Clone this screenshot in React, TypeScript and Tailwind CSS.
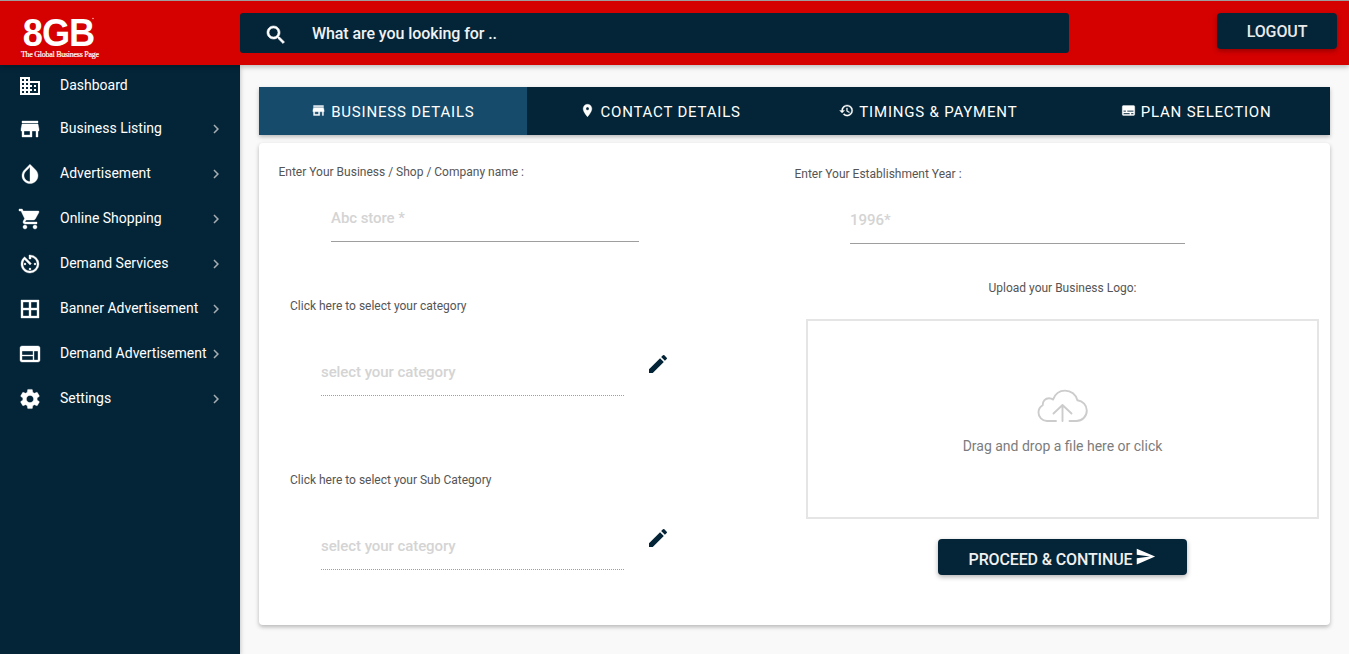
import React from "react";
import {
  MdBusiness,
  MdShoppingCart,
  MdAvTimer,
  MdBorderAll,
  MdWeb,
  MdSettings,
  MdChevronRight,
  MdPlace,
  MdRestore,
  MdSubtitles,
  MdEdit,
  MdSend,
} from "react-icons/md";

type IconProps = { className?: string };

function DropIcon({ className }: IconProps) {
  return (
    <svg viewBox="0 0 24 24" fill="currentColor" className={className}>
      <path d="M17.66 7.93L12 2.27 6.34 7.93c-3.12 3.12-3.12 8.19 0 11.31C7.9 20.8 9.95 21.58 12 21.58s4.1-.78 5.66-2.34c3.12-3.12 3.12-8.19 0-11.31zM12 19.59c-1.6 0-3.11-.62-4.24-1.76C6.62 16.69 6 15.19 6 13.59s.62-3.11 1.76-4.24L12 5.1v14.49z" />
    </svg>
  );
}

function StoreIcon({ className }: IconProps) {
  return (
    <svg viewBox="0 0 24 24" fill="currentColor" className={className}>
      <path d="M20 4H4v2h16V4zm1 10v-2l-1-5H4l-1 5v2h1v6h10v-6h4v6h2v-6h1zm-9 4H6v-4h6v4z" />
    </svg>
  );
}

function SearchIcon({ className }: IconProps) {
  return (
    <svg viewBox="0 0 24 24" fill="currentColor" stroke="currentColor" strokeWidth="0.6" className={className}>
      <path d="M15.5 14h-.79l-.28-.27C15.41 12.59 16 11.11 16 9.5 16 5.91 13.09 3 9.500 3S3 5.910 3 9.500 5.910 16 9.500 16c1.610 0 3.090-.59 4.230-1.570l.27.28v.79l5 4.990L20.490 19l-4.990-5zm-6 0C7.010 14 5 11.990 5 9.500S7.010 5 9.500 5 14 7.010 14 9.500 11.990 14 9.500 14z" />
    </svg>
  );
}

function CloudIcon() {
  return (
    <svg
      width="52"
      height="34"
      viewBox="0 0 52 34"
      fill="none"
      stroke="#cccccc"
      strokeWidth="1.9"
      strokeLinecap="round"
      strokeLinejoin="round"
    >
      <path d="M19 32H10C5 32 1.500 28 1.500 23.500c0-3.300 1.600-5.700 4.200-7.200C5.500 12 8.500 9.200 12 9.200c1.600 0 3 .5 4 1.400C18 5.200 22.300 1.600 28 1.600c6.200 0 11 4 12.400 9.700C45.800 11.900 49.800 16.200 49.800 21.500 49.800 27.500 45 32 39.500 32H32.500" />
      <path d="M25.500 32V16M16.500 24.500 25.500 16l9 8.500" />
    </svg>
  );
}

const NAV = [
  { label: "Business Listing", icon: StoreIcon },
  { label: "Advertisement", icon: DropIcon },
  { label: "Online Shopping", icon: MdShoppingCart },
  { label: "Demand Services", icon: MdAvTimer },
  { label: "Banner Advertisement", icon: MdBorderAll },
  { label: "Demand Advertisement", icon: MdWeb },
  { label: "Settings", icon: MdSettings },
];

const TABS = [
  { label: "BUSINESS DETAILS", icon: StoreIcon, active: true },
  { label: "CONTACT DETAILS", icon: MdPlace, active: false },
  { label: "TIMINGS & PAYMENT", icon: MdRestore, active: false },
  { label: "PLAN SELECTION", icon: MdSubtitles, active: false },
];

function Header() {
  return (
    <header className="relative z-20 flex h-[65px] shrink-0 items-start border-t border-[#9e9e9e] bg-[#d50000] pt-3 shadow-[0_2px_5px_rgba(0,0,0,0.26)]">
      <div className="w-60 shrink-0 pl-5">
        <svg width="90" height="50" viewBox="0 0 90 50" fill="#fff" className="overflow-visible">
          <text transform="scale(0.93 1)" x="3" y="33" fontFamily="Liberation Sans, sans-serif" fontWeight="700" fontSize="39" letterSpacing="-1.1">
            8GB
          </text>
          <circle cx="73" cy="5.500" r=".8" fillOpacity=".7" />
          <text x="1" y="44" fontFamily="Liberation Serif, serif" fontWeight="400" fontSize="8" stroke="#fff" strokeWidth=".2" textLength="78" lengthAdjust="spacing">
            The Global Business Page
          </text>
        </svg>
      </div>
      <div className="flex h-10 w-[829px] items-center rounded-[3px] bg-[#042538] pl-6 text-white">
        <SearchIcon className="mt-[3px] size-6" />
        <span className="mt-0.5 ml-6 text-base font-medium tracking-[-0.08px] text-[#f0f2f3]">What are you looking for ..</span>
      </div>
      <button className="mr-3 ml-auto h-9 w-[120px] rounded-sm bg-[#042538] pt-px text-base font-medium tracking-[-0.1px] text-[#eaeaea] shadow-[0_2px_5px_rgba(0,0,0,0.3)]">
        LOGOUT
      </button>
    </header>
  );
}

function Sidebar() {
  return (
    <nav className="z-10 flex w-60 shrink-0 flex-col bg-[#042538] text-sm text-white shadow-[0_2px_5px_rgba(0,0,0,0.26)]">
      <a className="flex h-[41px] items-center pl-[18px]">
        <MdBusiness className="size-6" />
        <span className="-mt-0.5 ml-[18px]">Dashboard</span>
      </a>
      {NAV.map(({ label, icon: Icon }) => (
        <a key={label} className="flex h-[45px] items-center pr-[15px] pl-[18px]">
          <Icon className="size-6 shrink-0 stroke-current [stroke-width:0.35] [&>path[fill=none]]:stroke-none" />
          <span className="-mt-0.5 ml-[18px] whitespace-nowrap">{label}</span>
          <MdChevronRight className="ml-auto size-[18px] shrink-0 text-[#a5adb3]" />
        </a>
      ))}
    </nav>
  );
}

function CategoryField({ label }: { label: string }) {
  return (
    <div className="flex h-[174px] flex-col">
      <span className="ml-[31px] text-xs leading-[18px]">{label}</span>
      <div className="mt-8 ml-[62px] flex">
        <div className="h-[49px] w-[303px] border-b border-dotted border-[#9e9e9e] pt-3.5 text-[15px] leading-[22px] font-medium tracking-[-0.07px] text-[#d4d4d4]">
          select your category
        </div>
        <MdEdit className="mt-[5px] ml-[22px] size-6 text-[#042538]" />
      </div>
    </div>
  );
}

export default function App() {
  return (
    <div className="flex h-[654px] w-[1349px] flex-col overflow-hidden bg-[#f9f9f9] font-[Roboto,sans-serif]">
      <Header />
      <div className="flex min-h-0 flex-1">
        <Sidebar />
        <main className="flex flex-1 flex-col pt-[22px] pr-[19px] pl-[19px]">
          <div className="grid h-12 shrink-0 grid-cols-4 bg-[#042538] text-white shadow-[0_2px_4px_rgba(0,0,0,0.25)]">
            {TABS.map(({ label, icon: Icon, active }) => (
              <button
                key={label}
                className={
                  active
                    ? "flex items-center justify-center gap-[5px] bg-[#164b6c]"
                    : "flex items-center justify-center gap-[5px]"
                }
              >
                <Icon className="-mt-px size-[15px] stroke-current [stroke-width:0.5] [&>path[fill=none]]:stroke-none" />
                <span className="mt-0.5 text-[15px] tracking-[0.8px]">{label}</span>
              </button>
            ))}
          </div>
          <section className="mt-2 flex h-[482px] shrink-0 rounded-sm bg-white text-[#555] shadow-[0_2px_4px_rgba(0,0,0,0.27)]">
            <div className="w-[536px] pt-5">
              <div className="h-[134px] pl-5">
                <div className="-ml-[0.5px] text-xs leading-[18px]">Enter Your Business / Shop / Company name :</div>
                <div className="mt-[26px] ml-[52px] h-[35px] w-[308px] border-b border-[#9e9e9e] text-[15px] leading-[22px] font-medium tracking-[-0.07px] text-[#d4d4d4]">
                  Abc store *
                </div>
              </div>
              <CategoryField label="Click here to select your category" />
              <CategoryField label="Click here to select your Sub Category" />
            </div>
            <div className="flex w-[535px] flex-col pt-[22px] pr-[11px] pl-[11px]">
              <div className="h-[114px]">
                <div className="-ml-[11.5px] text-xs leading-[18px]">Enter Your Establishment Year :</div>
                <div className="mt-[26px] ml-11 h-[35px] w-[335px] border-b border-[#9e9e9e] text-[15px] leading-[22px] font-medium text-[#d4d4d4]">
                  1996*
                </div>
              </div>
              <div className="text-center text-xs leading-[18px]">Upload your Business Logo:</div>
              <div className="mt-[22px] flex h-[200px] shrink-0 flex-col items-center border-2 border-[#e5e5e5] pt-[68px]">
                <CloudIcon />
                <span className="mt-3 text-sm leading-[22px] text-[#7c7c7c]">Drag and drop a file here or click</span>
              </div>
              <button className="mt-5 flex h-9 w-[249px] items-center justify-center self-center rounded-sm bg-[#042538] text-base font-medium tracking-[-0.13px] text-[#f0f0f0] shadow-[0_2px_5px_rgba(0,0,0,0.3)]">
                <span className="mt-1.5">PROCEED &amp; CONTINUE</span>
                <MdSend className="-mt-px ml-[3px] size-[21px] text-white" />
              </button>
            </div>
          </section>
        </main>
      </div>
    </div>
  );
}
